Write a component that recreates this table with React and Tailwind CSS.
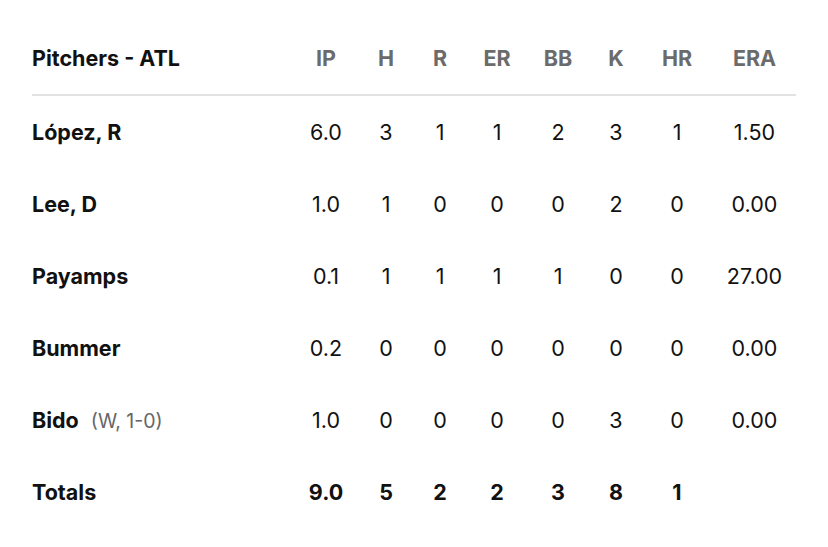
import React from 'react';

const cols = ['IP', 'H', 'R', 'ER', 'BB', 'K', 'HR', 'ERA'];

const pitchers = [
  { name: 'López, R', stats: ['6.0', '3', '1', '1', '2', '3', '1', '1.50'] },
  { name: 'Lee, D', stats: ['1.0', '1', '0', '0', '0', '2', '0', '0.00'] },
  { name: 'Payamps', stats: ['0.1', '1', '1', '1', '1', '0', '0', '27.00'] },
  { name: 'Bummer', stats: ['0.2', '0', '0', '0', '0', '0', '0', '0.00'] },
  { name: 'Bido', note: '(W, 1-0)', stats: ['1.0', '0', '0', '0', '0', '3', '0', '0.00'] },
];

const totals = ['9.0', '5', '2', '2', '3', '8', '1', ''];

const grid = 'grid grid-cols-[262px_64px_56px_52px_62px_60px_56px_66px_89px] items-center';

export default function App() {
  return (
    <div className="w-[828px] h-[547px] bg-white px-8 pt-[24px] font-['Inter',sans-serif] text-[21.5px] text-[#111] overflow-hidden">
      {/* Header */}
      <div className="h-[72px] border-b-2 border-[#e2e2e2]">
        <div className={`${grid} h-[68px]`}>
          <div className="font-bold text-[#111]">Pitchers - ATL</div>
          {cols.map((c) => (
            <div key={c} className="text-center font-bold text-[#6b6b6b]">
              {c}
            </div>
          ))}
        </div>
      </div>

      {/* Rows */}
      {pitchers.map((p) => (
        <div key={p.name} className={`${grid} h-[72px]`}>
          <div className="font-bold">
            {p.name}
            {p.note && (
              <span className="ml-3 font-normal text-[19.5px] text-[#666]">{p.note}</span>
            )}
          </div>
          {p.stats.map((s, i) => (
            <div key={i} className="text-center">
              {s}
            </div>
          ))}
        </div>
      ))}

      {/* Totals */}
      <div className={`${grid} h-[72px] font-bold`}>
        <div>Totals</div>
        {totals.map((s, i) => (
          <div key={i} className="text-center">
            {s}
          </div>
        ))}
      </div>
    </div>
  );
}
